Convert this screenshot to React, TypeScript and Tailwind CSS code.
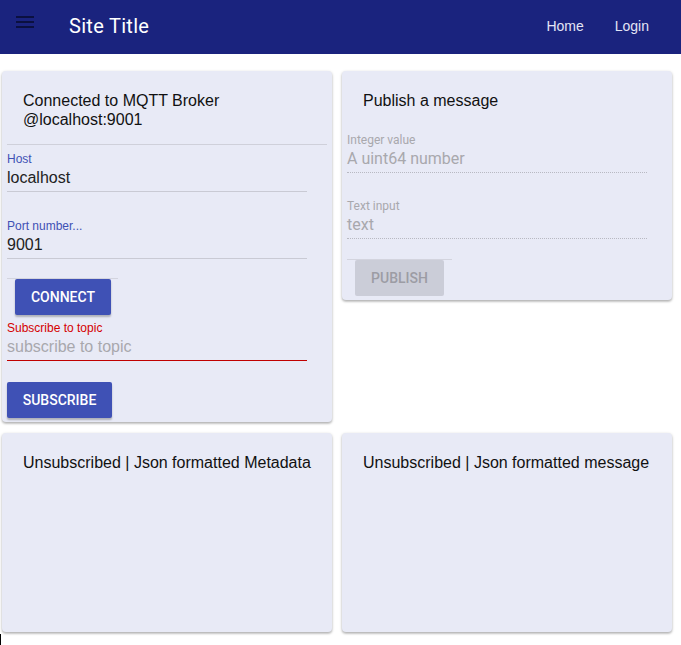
import { useState } from "react";

const card = "bg-[#e8eaf6] rounded-[4px] shadow-[0_1px_3px_rgba(0,0,0,0.25),0_2px_2px_rgba(0,0,0,0.12)]";

function Field({
    label,
    value,
    placeholder,
    state,
}: {
    label: string;
    value?: string;
    placeholder?: string;
    state: "active" | "error" | "disabled";
}) {
    const labelColor =
        state === "error" ? "text-[#d50000]" : state === "disabled" ? "text-[#a8a8ad]" : "text-[#3f51b5]";
    const line =
        state === "error"
            ? "border-b border-[#c00000]"
            : state === "disabled"
                ? "border-b border-dotted border-[#b8b9c2]"
                : "border-b border-[#c9cad4]";
    return (
        <div className="w-[300px]">
            <div className={`text-[12px] leading-[14px] ${labelColor}`}>{label}</div>
            <div className={`h-[26px] text-[16px] leading-[24px] ${line}`}>
                {value ? (
                    <span className="text-[#222]">{value}</span>
                ) : (
                    <span className="text-[#a8a8ad]">{placeholder}</span>
                )}
            </div>
        </div>
    );
}

export default function App() {
    const [topic] = useState("");

    return (
        <div className="min-h-[645px] bg-white font-['Liberation_Sans',Arial,sans-serif] relative">
            {/* App bar */}
            <header className="h-[54px] bg-[#1a237e] flex items-center px-[16px] font-['Roboto',sans-serif]">
                <svg width="18" height="12" viewBox="0 0 18 12" className="mt-[-10px]">
                    <rect x="0" y="0" width="18" height="2" fill="#0b1040" />
                    <rect x="0" y="5" width="18" height="2" fill="#0b1040" />
                    <rect x="0" y="10" width="18" height="2" fill="#0b1040" />
                </svg>
                <h1 className="ml-[35px] text-white text-[20px] tracking-[0.3px] mt-[-2px]">Site Title</h1>
                <nav className="ml-auto flex gap-[31px] mr-[16px] text-[#e3e5f5] text-[14px] font-['Liberation_Sans',sans-serif] mt-[-2px]">
                    <span>Home</span>
                    <span>Login</span>
                </nav>
            </header>

            <main className="grid grid-cols-[330px_330px] gap-x-[10px] gap-y-[11px] pl-[2px] pt-[17px]">
                {/* Connection card */}
                <section className={`${card} h-[351px] px-[5px]`}>
                    <div className="pl-[16px] pt-[20px] pb-[15px] text-[16px] leading-[19px] text-[#111]">
                        Connected to MQTT Broker
                        <br />
                        @localhost:9001
                    </div>
                    <div className="border-t border-[#cfd0da] pt-[7px]">
                        <Field label="Host" value="localhost" state="active" />
                        <div className="h-[27px]" />
                        <Field label="Port number..." value="9001" state="active" />
                        <div className="mt-[19px] w-[111px] border-t border-[#d3d4de]" />
                        <button className="ml-[8px] h-[36px] w-[96px] rounded-[2px] bg-[#3f51b5] text-white text-[14px] font-medium font-['Roboto',sans-serif] shadow-[0_2px_2px_rgba(0,0,0,0.25)]">
                            CONNECT
                        </button>
                        <div className="mt-[6px]">
                            <Field label="Subscribe to topic" value={topic} placeholder="subscribe to topic" state="error" />
                        </div>
                        <button className="mt-[21px] h-[36px] w-[105px] rounded-[2px] bg-[#3f51b5] text-white text-[14px] font-medium font-['Roboto',sans-serif] shadow-[0_2px_2px_rgba(0,0,0,0.25)]">
                            SUBSCRIBE
                        </button>
                    </div>
                </section>

                {/* Publish card */}
                <section className={`${card} h-[229px] self-start px-[5px]`}>
                    <div className="pl-[16px] pt-[20px] text-[16px] leading-[19px] text-[#111]">Publish a message</div>
                    <div className="mt-[23px] font-['Roboto',sans-serif]">
                        <Field label="Integer value" placeholder="A uint64 number" state="disabled" />
                        <div className="h-[26px]" />
                        <Field label="Text input" placeholder="text" state="disabled" />
                        <div className="mt-[20px] w-[105px] border-t border-[#d3d4de]" />
                        <button className="ml-[8px] h-[36px] w-[89px] rounded-[2px] bg-[#cbcdd8] text-[#9c9ca4] text-[14px] font-medium font-['Roboto',sans-serif]">
                            PUBLISH
                        </button>
                    </div>
                </section>

                <section className={`${card} h-[199px]`}>
                    <div className="pl-[21px] pt-[18px] text-[16px] text-[#111]">Unsubscribed | Json formatted Metadata</div>
                </section>
                <section className={`${card} h-[199px]`}>
                    <div className="pl-[21px] pt-[18px] text-[16px] text-[#111]">Unsubscribed | Json formatted message</div>
                </section>
            </main>

            <div className="absolute left-0 top-[634px] w-[1px] h-[11px] bg-black" />
        </div>
    );
}
